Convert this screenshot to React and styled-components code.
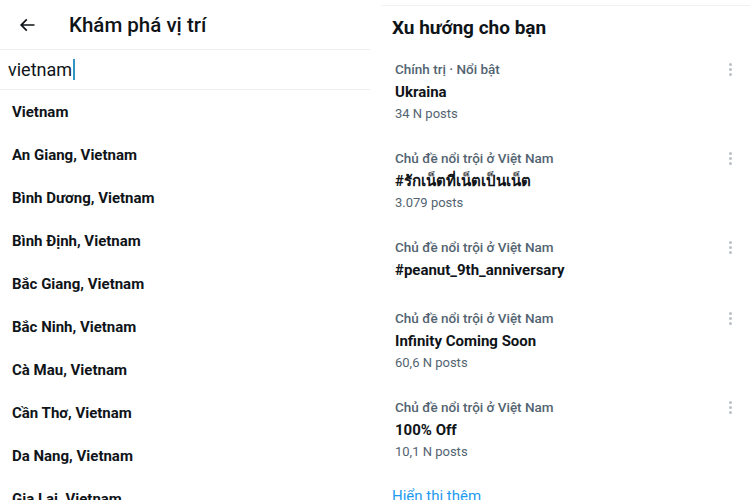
import React from 'react'
import styled, { createGlobalStyle } from 'styled-components'

const GlobalStyle = createGlobalStyle`
    body {
        margin: 0;
        background: #fff;
        font-family: Roboto, "Noto Sans", "DejaVu Sans", sans-serif;
        color: #0f1419;
    }
`;

const Page = styled.div`
    width: 750px;
    height: 500px;
    display: flex;
    overflow: hidden;
    background: #fff;
`;

/* left column: location search */
const Left = styled.div`
    width: 370px;
    flex-shrink: 0;
    display: flex;
    flex-direction: column;
`;

const Header = styled.div`
    height: 49px;
    flex-shrink: 0;
    display: flex;
    align-items: center;
    border-bottom: 1px solid #eceff1;
`;

const BackButton = styled.div`
    width: 69px;
    display: flex;
    align-items: center;
    padding-left: 17px;
    box-sizing: border-box;
    color: #0f1419;
`;

const Title = styled.h1`
    margin: 0;
    font-size: 20.5px;
    font-weight: 500;
`;

const SearchRow = styled.div`
    height: 39px;
    flex-shrink: 0;
    display: flex;
    align-items: center;
    padding-left: 8px;
    border-bottom: 1px solid #eceff1;
    font-size: 18px;
    color: #0f1419;
`;

const Caret = styled.span`
    width: 2px;
    height: 21px;
    margin-left: 1px;
    background: #2f95c4;
`;

const Place = styled.div`
    height: 43px;
    flex-shrink: 0;
    display: flex;
    align-items: center;
    padding-left: 12px;
    font-size: 15px;
    font-weight: 700;
`;

/* right column: trends */
const Right = styled.div`
    flex: 1;
    margin-left: 11px;
    margin-top: 5px;
    border-top: 1px solid #eff1f3;
    display: flex;
    flex-direction: column;
`;

const Heading = styled.h2`
    margin: 0;
    height: 43px;
    flex-shrink: 0;
    display: flex;
    align-items: center;
    padding-left: 11px;
    font-size: 19px;
    font-weight: 700;
`;

const Trend = styled.div`
    position: relative;
    flex-shrink: 0;
    padding: 9px 0 ${p => (p.$compact ? 16 : 15)}px 14px;
    display: flex;
    flex-direction: column;
`;

const Category = styled.div`
    height: 22px;
    display: flex;
    align-items: center;
    font-size: 13.5px;
    font-weight: 500;
    color: #536471;
`;

const TrendName = styled.div`
    height: 24px;
    display: flex;
    align-items: center;
    font-size: 15px;
    font-weight: 700;
    color: #0f1419;
`;

const Count = styled.div`
    height: 19px;
    display: flex;
    align-items: center;
    font-size: 13px;
    color: #536471;
`;

const More = styled.div`
    position: absolute;
    top: 14px;
    right: 18px;
    display: flex;
    flex-direction: column;
    gap: 2px;
    span {
        width: 3px;
        height: 3px;
        border-radius: 50%;
        background: #b9c0c6;
    }
`;

const ShowMore = styled.div`
    flex-shrink: 0;
    padding: 11px 0 0 11px;
    font-size: 15px;
    color: #1d9bf0;
`;

const places = [
    'Vietnam',
    'An Giang, Vietnam',
    'Bình Dương, Vietnam',
    'Bình Định, Vietnam',
    'Bắc Giang, Vietnam',
    'Bắc Ninh, Vietnam',
    'Cà Mau, Vietnam',
    'Cần Thơ, Vietnam',
    'Da Nang, Vietnam',
    'Gia Lai, Vietnam',
]

const trends = [
    { category: 'Chính trị · Nổi bật', name: 'Ukraina', count: '34 N posts' },
    { category: 'Chủ đề nổi trội ở Việt Nam', name: '#รักเน็ตที่เน็ตเป็นเน็ต', count: '3.079 posts' },
    { category: 'Chủ đề nổi trội ở Việt Nam', name: '#peanut_9th_anniversary' },
    { category: 'Chủ đề nổi trội ở Việt Nam', name: 'Infinity Coming Soon', count: '60,6 N posts' },
    { category: 'Chủ đề nổi trội ở Việt Nam', name: '100% Off', count: '10,1 N posts' },
]

const BackArrow = () => (
    <svg width="20" height="20" viewBox="0 0 24 24" fill="currentColor">
        <path d="M7.414 13l5.043 5.04-1.414 1.42L3.586 12l7.457-7.46 1.414 1.42L7.414 11H21v2H7.414z" />
    </svg>
)

const App = () => {
  return (
    <Page>
        <GlobalStyle />
        <Left>
            <Header>
                <BackButton><BackArrow /></BackButton>
                <Title>Khám phá vị trí</Title>
            </Header>
            <SearchRow>vietnam<Caret /></SearchRow>
            {places.map(p => <Place key={p}>{p}</Place>)}
        </Left>
        <Right>
            <Heading>Xu hướng cho bạn</Heading>
            {trends.map(t => (
                <Trend key={t.name} $compact={!t.count}>
                    <Category>{t.category}</Category>
                    <TrendName>{t.name}</TrendName>
                    {t.count && <Count>{t.count}</Count>}
                    <More><span /><span /><span /></More>
                </Trend>
            ))}
            <ShowMore>Hiển thị thêm</ShowMore>
        </Right>
    </Page>
  )
}

export default App
